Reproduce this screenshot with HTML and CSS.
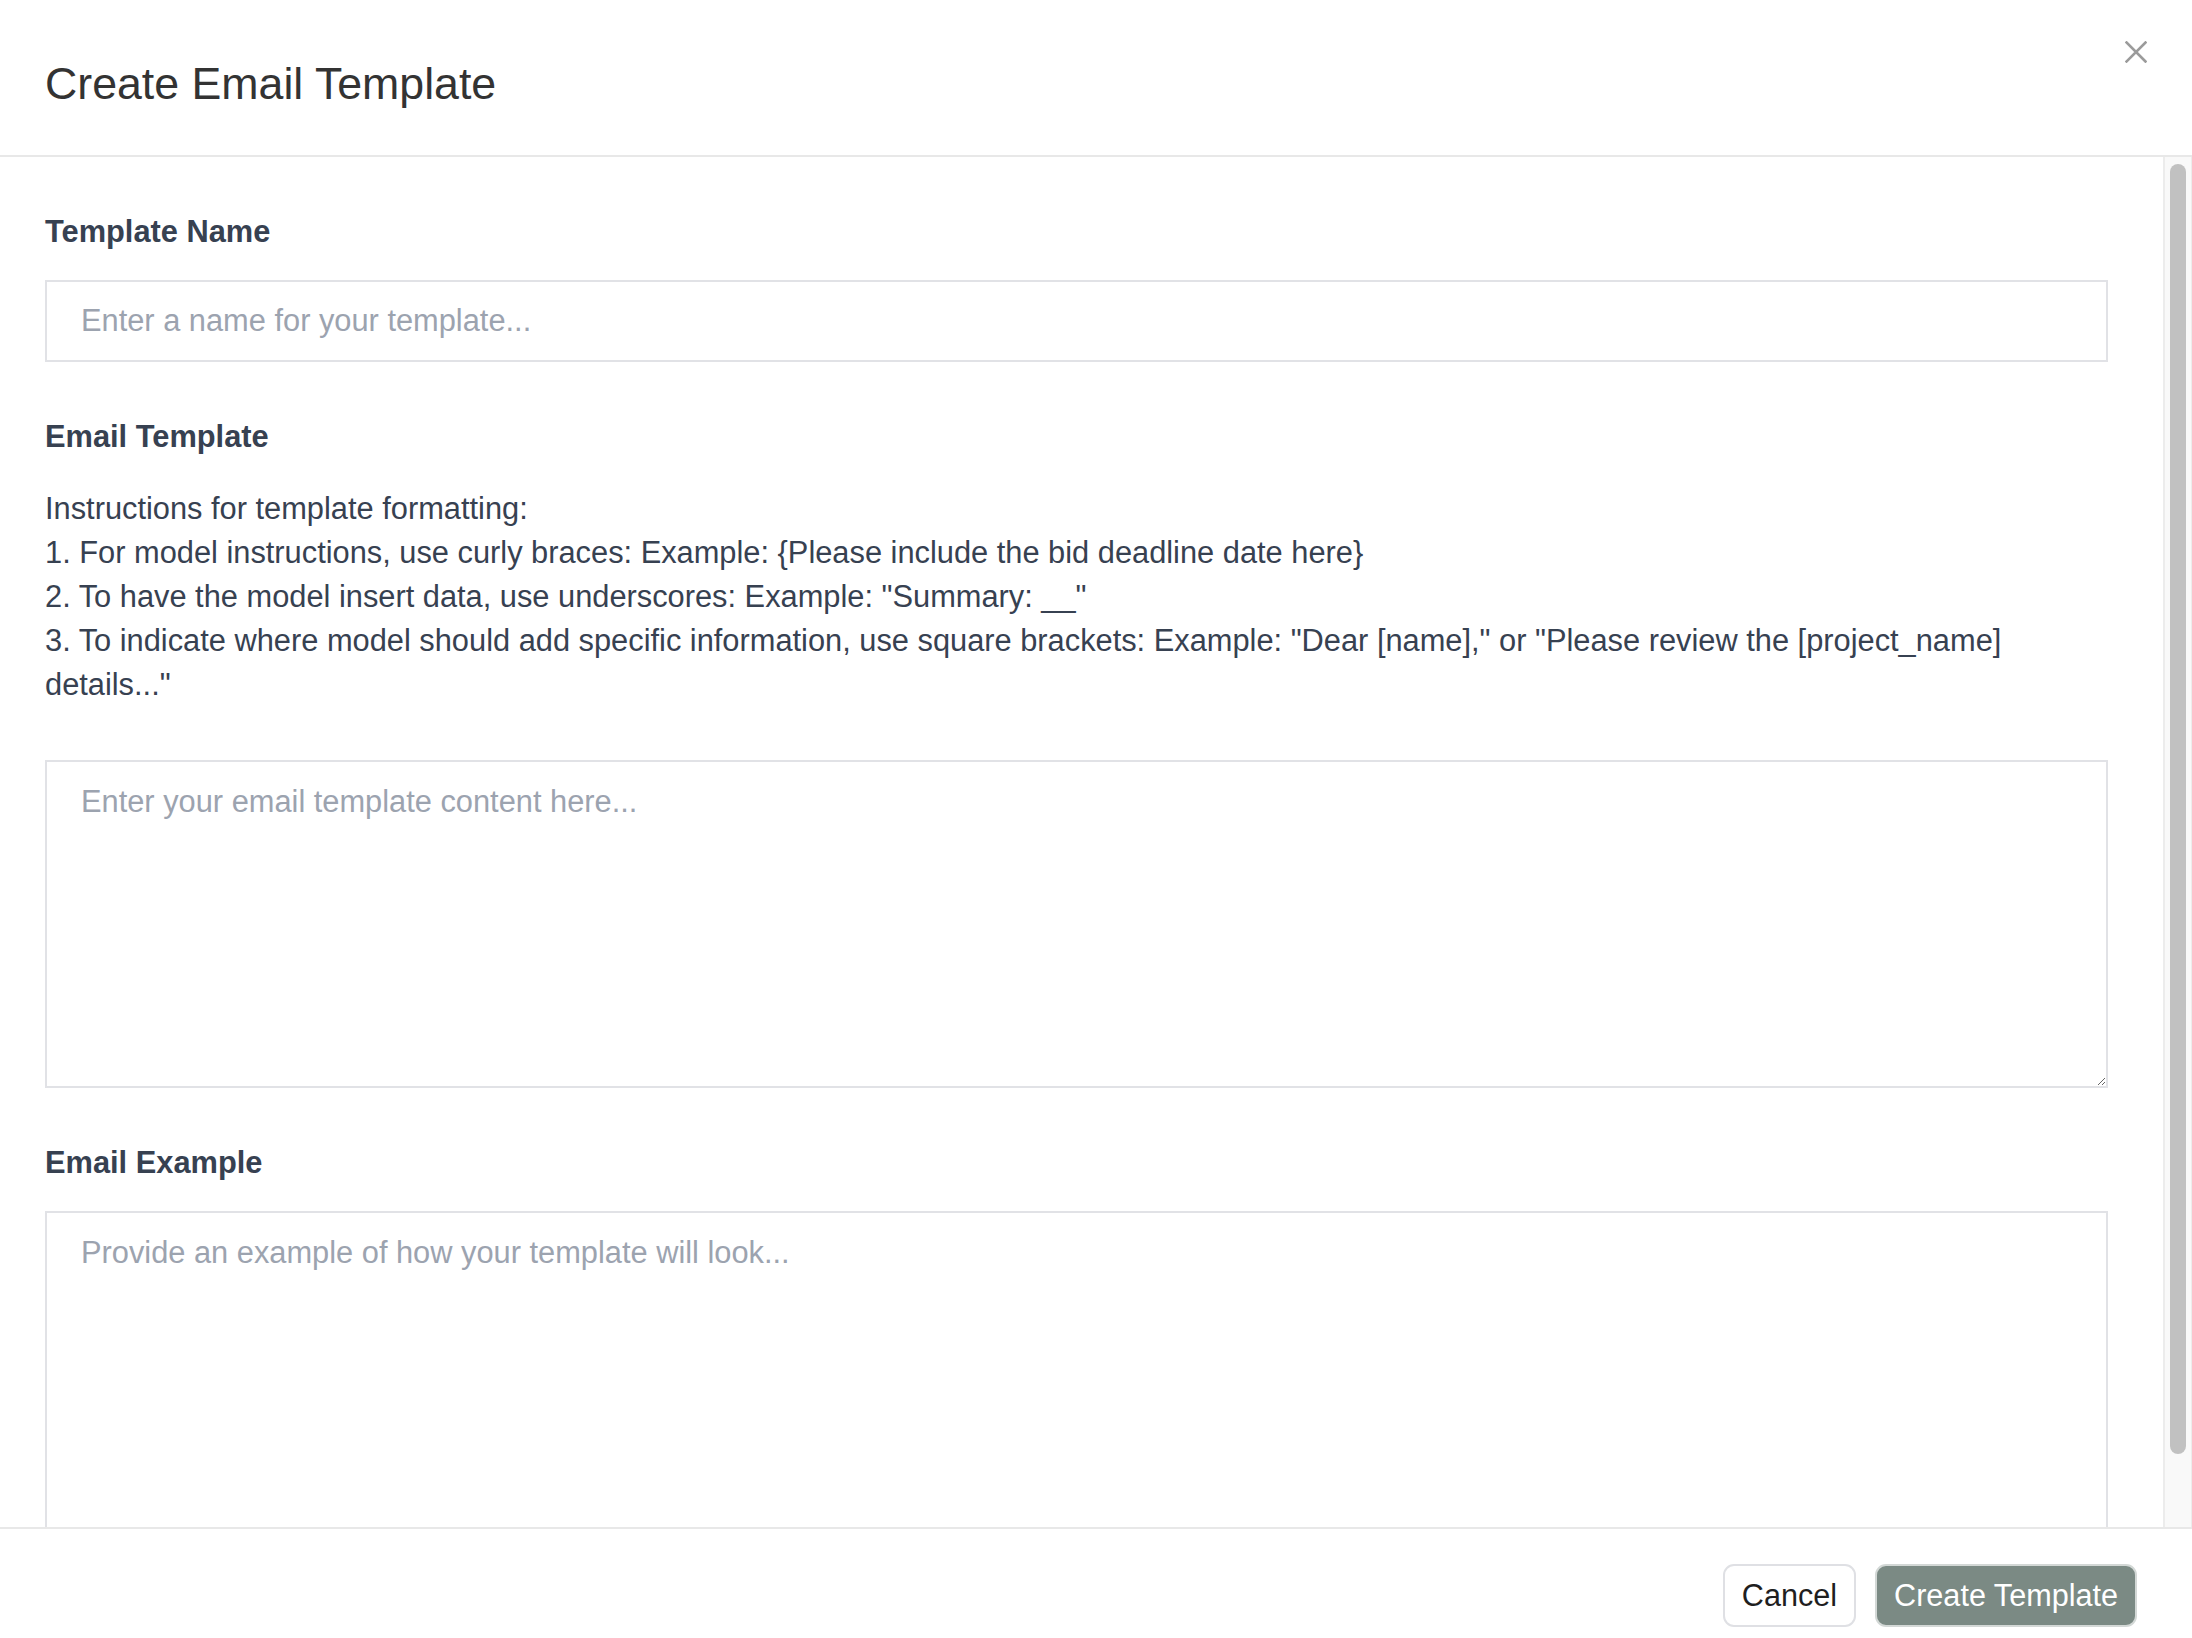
FILE: index.html
```html
<!DOCTYPE html>
<html lang="en">
<head>
<meta charset="utf-8">
<title>Create Email Template</title>
<link rel="stylesheet" href="styles.css">
</head>
<body>
<div class="modal">
  <header class="modal-header">
    <h1 class="modal-title">Create Email Template</h1>
    <button class="close-btn" aria-label="Close">
      <svg viewBox="0 0 22 22" width="22" height="22"><path d="M1.5 1.5 L20.5 20.5 M20.5 1.5 L1.5 20.5" stroke="#9b9b9b" stroke-width="2.6" stroke-linecap="square" fill="none"/></svg>
    </button>
  </header>
  <div class="modal-body">
    <div class="scroll-content">
      <div class="field">
        <label class="field-label">Template Name</label>
        <input class="text-input" type="text" placeholder="Enter a name for your template...">
      </div>
      <div class="field">
        <label class="field-label">Email Template</label>
        <div class="instructions">
          <div>Instructions for template formatting:</div>
          <div>1. For model instructions, use curly braces: Example: {Please include the bid deadline date here}</div>
          <div>2. To have the model insert data, use underscores: Example: "Summary: __"</div>
          <div>3. To indicate where model should add specific information, use square brackets: Example: "Dear [name]," or "Please review the [project_name] details..."</div>
        </div>
        <textarea class="text-area" placeholder="Enter your email template content here..."></textarea>
      </div>
      <div class="field">
        <label class="field-label">Email Example</label>
        <textarea class="text-area" placeholder="Provide an example of how your template will look..."></textarea>
      </div>
    </div>
    <div class="scrollbar"><div class="scroll-thumb"></div></div>
  </div>
  <footer class="modal-footer">
    <button class="btn btn-cancel">Cancel</button>
    <button class="btn btn-primary">Create Template</button>
  </footer>
</div>
</body>
</html>
```

FILE: styles.css
```css
* { box-sizing: border-box; }
html, body { margin: 0; padding: 0; background: #ffffff; }
body {
  font-family: "Liberation Sans", Arial, Helvetica, sans-serif;
  width: 2192px;
  height: 1638px;
  overflow: hidden;
}
.modal {
  display: flex;
  flex-direction: column;
  height: 1638px;
  background: #fff;
}
.modal-header {
  display: flex;
  justify-content: space-between;
  align-items: flex-start;
  height: 157px;
  flex: 0 0 157px;
  padding: 0 45px;
  border-bottom: 2px solid #e8e8e8;
}
.modal-title {
  margin: 58px 0 0 0;
  font-size: 44.7px;
  line-height: 52px;
  font-weight: 400;
  color: #333333;
}
.close-btn {
  margin-top: 41px;
  padding: 0;
  border: 0;
  background: none;
  width: 22px;
  height: 22px;
  display: flex;
}
.modal-body {
  flex: 1 1 auto;
  display: flex;
  min-height: 0;
  overflow: hidden;
}
.scroll-content {
  flex: 1 1 auto;
  padding: 52px 55px 0 45px;
  overflow: hidden;
  display: flex;
  flex-direction: column;
  gap: 52px;
}
.field {
  display: flex;
  flex-direction: column;
}
.field-label {
  font-size: 30.8px;
  line-height: 45px;
  font-weight: 700;
  color: #374151;
  margin-bottom: 26px;
}
.text-input {
  height: 82px;
  border: 2px solid #e1e2e6;
  border-radius: 0;
  padding: 0 34px;
  font-family: inherit;
  font-size: 30.8px;
  color: #374151;
  outline: none;
  background: #fff;
}
.text-input::placeholder, .text-area::placeholder {
  color: #9ca3af;
  opacity: 1;
}
.instructions {
  font-size: 30.8px;
  line-height: 44px;
  color: #374151;
  margin-top: 2px;
  margin-bottom: 53px;
}
.text-area {
  height: 328px;
  border: 2px solid #e1e2e6;
  border-radius: 0;
  padding: 17px 34px;
  font-family: inherit;
  font-size: 30.8px;
  line-height: 45px;
  color: #374151;
  outline: none;
  resize: vertical;
  background: #fff;
}
.scrollbar {
  flex: 0 0 29px;
  width: 29px;
  background: #f9f9f9;
  border-left: 2px solid #ececec;
  border-right: 1px solid #ececec;
  padding: 7px 5px 0 5px;
}
.scroll-thumb {
  width: 16px;
  height: 1290px;
  background: #c1c1c1;
  border-radius: 8px;
}
.modal-footer {
  flex: 0 0 111px;
  display: flex;
  justify-content: flex-end;
  align-items: flex-start;
  gap: 19px;
  padding: 35px 55px 0 0;
  border-top: 2px solid #e8e8e8;
}
.btn {
  height: 63px;
  padding: 0 17px;
  font-family: inherit;
  font-size: 30.6px;
  border-radius: 11px;
  cursor: pointer;
}
.btn-cancel {
  background: #ffffff;
  color: #1f1f1f;
  border: 2px solid #dfe0e4;
}
.btn-primary {
  background: #7b8a84;
  color: #ffffff;
  border: 2px solid #d3d8d6;
}
```
